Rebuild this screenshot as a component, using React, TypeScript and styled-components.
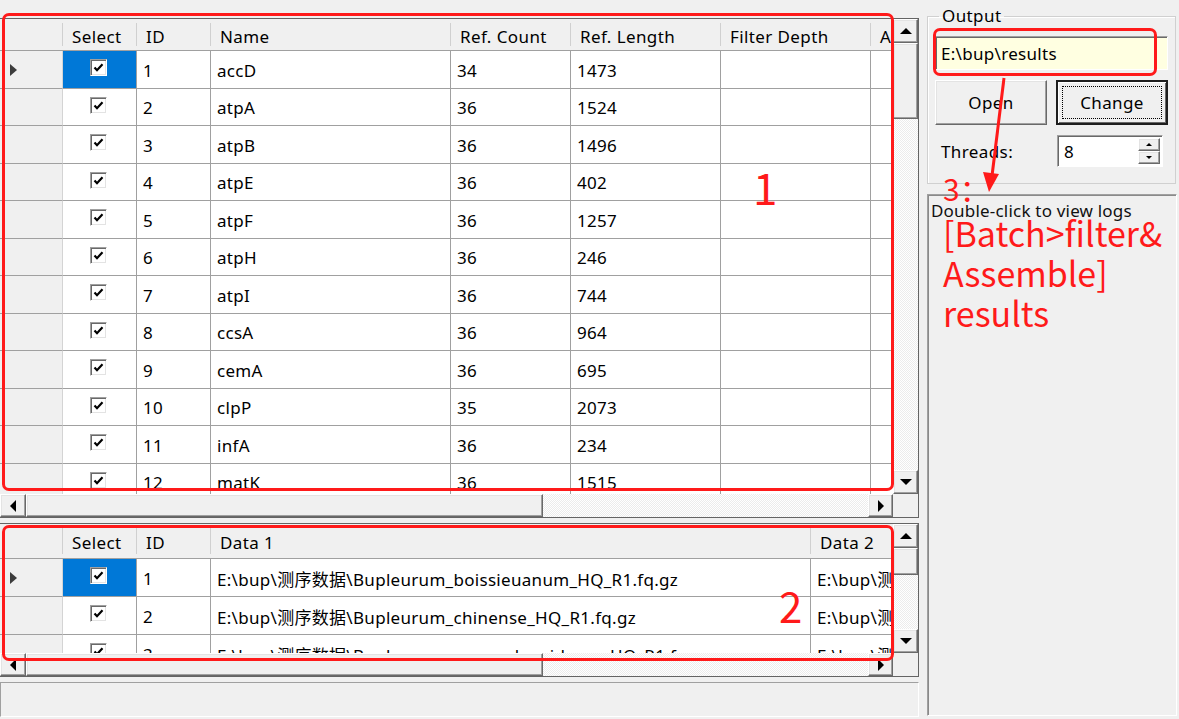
import React from 'react';
import styled, { createGlobalStyle, css } from 'styled-components';

const Global = createGlobalStyle`
  html, body { margin: 0; padding: 0; background: #f0f0f0; }
  body { font-family: "Noto Sans", "Noto Sans CJK SC", sans-serif; }
`;

const UI_FONT = `"Noto Sans", "Noto Sans CJK SC", sans-serif`;
const RED = '#ff1a1a';

const Window = styled.div`
  position: relative;
  width: 1179px;
  height: 719px;
  overflow: hidden;
  background: #f0f0f0;
  display: flex;
  font-family: ${UI_FONT};
  font-size: 17px;
  color: #000;
`;

const LeftPane = styled.div`
  width: 919px;
  flex: none;
  box-sizing: border-box;
  padding-top: 18px;
  display: flex;
  flex-direction: column;
  gap: 5px;
`;

const GridFrame = styled.div<{ $h: number }>`
  height: ${p => p.$h}px;
  box-sizing: border-box;
  border: 1px solid #646464;
  border-left: none;
  display: grid;
  grid-template-columns: 1fr 25px;
  grid-template-rows: 1fr 23px;
  background: #f0f0f0;
  overflow: hidden;
`;

const TableArea = styled.div`
  overflow: hidden;
  background: #fff;
  min-width: 0;
  min-height: 0;
`;

const Row = styled.div<{ $h: number }>`
  display: flex;
  height: ${p => p.$h}px;
  width: max-content;
`;

const HeadCell = styled.div<{ $w: number; $sep?: boolean }>`
  position: relative;
  width: ${p => p.$w}px;
  flex: none;
  box-sizing: border-box;
  background: #f0f0f0;
  border-bottom: 1px solid #a0a0a0;
  padding-left: 9px;
  padding-top: 3px;
  display: flex;
  align-items: center;
  white-space: nowrap;
  overflow: hidden;
  letter-spacing: 0.4px;
  ${p => p.$sep && css`
    &::after {
      content: '';
      position: absolute;
      right: 0;
      top: 4px;
      bottom: 4px;
      width: 1px;
      background: #d0d0d0;
    }
  `}
`;

const RowHead = styled.div`
  width: 63px;
  flex: none;
  box-sizing: border-box;
  background: #f0f0f0;
  border-bottom: 1px solid #a0a0a0;
  border-right: 1px solid #d4d4d4;
  display: flex;
  align-items: center;
  padding-left: 10px;
`;

const Cell = styled.div<{ $w: number; $sel?: boolean; $center?: boolean }>`
  width: ${p => p.$w}px;
  flex: none;
  box-sizing: border-box;
  border-right: 1px solid #a0a0a0;
  border-bottom: 1px solid #a0a0a0;
  background: ${p => (p.$sel ? '#0078d7' : '#fff')};
  display: flex;
  align-items: center;
  justify-content: ${p => (p.$center ? 'center' : 'flex-start')};
  padding-left: ${p => (p.$center ? '0' : '6px')};
  padding-top: 1px;
  white-space: nowrap;
  overflow: hidden;
  letter-spacing: 0.3px;
`;

const CheckBox = styled.span`
  display: inline-flex;
  align-items: center;
  justify-content: center;
  width: 17px;
  height: 17px;
  box-sizing: border-box;
  margin-left: -3px;
  margin-top: -5px;
  border: 1px solid;
  border-color: #a0a0a0 #ffffff #ffffff #a0a0a0;
  box-shadow: inset 1px 1px 0 #696969, inset -1px -1px 0 #e3e3e3;
  background: #fff;
`;

const RowArrow = styled.span`
  width: 0;
  height: 0;
  border-top: 6px solid transparent;
  border-bottom: 6px solid transparent;
  border-left: 7px solid #3c3c3c;
`;

const raised = css`
  box-sizing: border-box;
  background: #f0f0f0;
  border: 1px solid;
  border-color: #ffffff #696969 #696969 #ffffff;
  box-shadow: inset -1px -1px 0 #a0a0a0, inset 1px 1px 0 #e3e3e3;
`;

const VScroll = styled.div`
  display: flex;
  flex-direction: column;
  min-height: 0;
  overflow: hidden;
`;

const HScroll = styled.div`
  display: flex;
  min-width: 0;
  overflow: hidden;
`;

const Track = styled.div`
  flex: 1;
  background: repeating-conic-gradient(#ffffff 0 25%, #ececec 0 50%) 0 0 / 2px 2px;
`;

const ArrowBtn = styled.div<{ $len: number; $vertical?: boolean }>`
  ${raised};
  flex: none;
  ${p => (p.$vertical ? `height: ${p.$len}px;` : `width: ${p.$len}px;`)}
  display: flex;
  align-items: center;
  justify-content: center;
`;

const Thumb = styled.div<{ $len: number; $vertical?: boolean }>`
  ${raised};
  flex: none;
  ${p => (p.$vertical ? `height: ${p.$len}px;` : `width: ${p.$len}px;`)}
`;

const Tri = styled.span<{ $dir: 'up' | 'down' | 'left' | 'right' }>`
  width: 0;
  height: 0;
  ${p =>
    p.$dir === 'up'
      ? 'border-left: 6px solid transparent; border-right: 6px solid transparent; border-bottom: 6px solid #000;'
      : p.$dir === 'down'
      ? 'border-left: 6px solid transparent; border-right: 6px solid transparent; border-top: 6px solid #000;'
      : p.$dir === 'left'
      ? 'border-top: 6px solid transparent; border-bottom: 6px solid transparent; border-right: 6px solid #000;'
      : 'border-top: 6px solid transparent; border-bottom: 6px solid transparent; border-left: 6px solid #000;'}
`;

const Corner = styled.div`
  background: #f0f0f0;
`;

const StatusBar = styled.div`
  height: 35px;
  box-sizing: border-box;
  border: 1px solid;
  border-color: #a0a0a0 #ffffff #ffffff #a0a0a0;
  background: #f0f0f0;
`;

const RightPane = styled.div`
  flex: 1;
  box-sizing: border-box;
  padding: 6px 2px 3px 8px;
  display: flex;
  flex-direction: column;
  gap: 10px;
`;

const GroupBox = styled.fieldset`
  margin: 0;
  box-sizing: border-box;
  width: 249px;
  height: 178px;
  border: 1px solid #d0d0d0;
  box-shadow: inset 1px 1px 0 #fff;
  padding: 10px 7px 0 7px;
  display: flex;
  flex-direction: column;
`;

const Legend = styled.legend`
  padding: 0 3px;
  margin-left: 4px;
  font-size: 17px;
  line-height: 20px;
  letter-spacing: 0.4px;
`;

const PathBox = styled.div`
  height: 34px;
  box-sizing: border-box;
  border: 1px solid;
  border-color: #a0a0a0 #ffffff #ffffff #a0a0a0;
  box-shadow: inset 1px 1px 0 #696969;
  background: #ffffe1;
  display: flex;
  align-items: center;
  padding-left: 5px;
  letter-spacing: 0.3px;
`;

const ButtonRow = styled.div`
  display: flex;
  gap: 9px;
  margin-top: 10px;
`;

const Button = styled.div<{ $default?: boolean }>`
  width: 112px;
  height: 45px;
  box-sizing: border-box;
  background: #f0f0f0;
  display: flex;
  align-items: center;
  justify-content: center;
  letter-spacing: 0.4px;
  position: relative;
  ${p =>
    p.$default
      ? css`
          border: 2px solid #1e1e1e;
          box-shadow: inset 1px 1px 0 #fff, inset -1px -1px 0 #696969;
          &::after {
            content: '';
            position: absolute;
            inset: 4px;
            border: 1px dotted #000;
          }
        `
      : css`
          border: 1px solid;
          border-color: #ffffff #696969 #696969 #ffffff;
          box-shadow: inset -1px -1px 0 #a0a0a0, inset 1px 1px 0 #e3e3e3;
        `}
`;

const ThreadRow = styled.div`
  display: flex;
  align-items: center;
  margin-top: 10px;
`;

const ThreadLabel = styled.div`
  width: 122px;
  padding-left: 6px;
  box-sizing: border-box;
  letter-spacing: 0.4px;
`;

const Spin = styled.div`
  width: 106px;
  height: 32px;
  box-sizing: border-box;
  border: 1px solid;
  border-color: #a0a0a0 #ffffff #ffffff #a0a0a0;
  box-shadow: inset 1px 1px 0 #696969;
  background: #fff;
  display: flex;
  align-items: center;
  padding: 2px 2px 2px 6px;
`;

const SpinValue = styled.div`
  flex: 1;
`;

const SpinButtons = styled.div`
  width: 22px;
  height: 100%;
  display: flex;
  flex-direction: column;
`;

const SpinBtn = styled.div`
  ${raised};
  flex: 1;
  display: flex;
  align-items: center;
  justify-content: center;
`;

const SmallTri = styled.span<{ $up?: boolean }>`
  width: 0;
  height: 0;
  border-left: 3px solid transparent;
  border-right: 3px solid transparent;
  ${p => (p.$up ? 'border-bottom: 3px solid #000;' : 'border-top: 3px solid #000;')}
`;

const LogPanel = styled.div`
  flex: 1;
  box-sizing: border-box;
  border: 1px solid;
  border-color: #a0a0a0 #ffffff #ffffff #a0a0a0;
  box-shadow: inset 1px 1px 0 #8a8a8a;
  padding: 6px 3px;
  font-size: 17px;
  line-height: 20px;
  letter-spacing: 0.2px;
  color: #111;
`;

/* annotation overlay */
const Overlay = styled.div`
  position: absolute;
  inset: 0;
  pointer-events: none;
`;

const RedBox = styled.div<{ $x: number; $y: number; $w: number; $h: number }>`
  position: absolute;
  left: ${p => p.$x}px;
  top: ${p => p.$y}px;
  width: ${p => p.$w}px;
  height: ${p => p.$h}px;
  box-sizing: border-box;
  border: 3px solid ${RED};
  border-radius: 7px;
`;

const RedText = styled.div<{ $x: number; $y: number; $size: number; $lh?: number }>`
  position: absolute;
  left: ${p => p.$x}px;
  top: ${p => p.$y}px;
  font-family: "Noto Sans CJK SC", "Noto Sans", sans-serif;
  font-size: ${p => p.$size}px;
  line-height: ${p => p.$lh ?? p.$size * 1.2}px;
  color: ${RED};
  white-space: pre;
`;

const ArrowSvg = styled.svg`
  position: absolute;
  left: 0;
  top: 0;
`;

type Col = { title: string; w: number };

const Check = () => (
  <CheckBox>
    <svg width="11" height="11" viewBox="0 0 11 11">
      <polyline points="1.5,5.5 4,8.2 9.5,2.2" fill="none" stroke="#000" strokeWidth="2.2" />
    </svg>
  </CheckBox>
);

type GridProps = {
  height: number;
  cols: Col[];
  rows: string[][];
  headerH: number;
  rowH: number;
  vThumb: number;
  hThumb: number;
};

const DataGrid = ({ height, cols, rows, headerH, rowH, vThumb, hThumb }: GridProps) => (
  <GridFrame $h={height}>
    <TableArea>
      <Row $h={headerH}>
        <HeadCell $w={63} $sep />
        {cols.map(c => (
          <HeadCell key={c.title} $w={c.w} $sep>
            {c.title}
          </HeadCell>
        ))}
      </Row>
      {rows.map((r, i) => {
        const h = Math.round((i + 1) * rowH) - Math.round(i * rowH);
        return (
          <Row key={i} $h={h}>
            <RowHead>{i === 0 && <RowArrow />}</RowHead>
            <Cell $w={cols[0].w} $sel={i === 0} $center>
              <Check />
            </Cell>
            {r.map((v, j) => (
              <Cell key={j} $w={cols[j + 1].w}>
                {v}
              </Cell>
            ))}
          </Row>
        );
      })}
    </TableArea>
    <VScroll>
      <ArrowBtn $len={24} $vertical>
        <Tri $dir="up" />
      </ArrowBtn>
      <Thumb $len={vThumb} $vertical />
      <Track />
      <ArrowBtn $len={24} $vertical>
        <Tri $dir="down" />
      </ArrowBtn>
    </VScroll>
    <HScroll>
      <ArrowBtn $len={26}>
        <Tri $dir="left" />
      </ArrowBtn>
      <Thumb $len={hThumb} />
      <Track />
      <ArrowBtn $len={25}>
        <Tri $dir="right" />
      </ArrowBtn>
    </HScroll>
    <Corner />
  </GridFrame>
);

const TOP_COLS: Col[] = [
  { title: 'Select', w: 74 },
  { title: 'ID', w: 74 },
  { title: 'Name', w: 240 },
  { title: 'Ref. Count', w: 120 },
  { title: 'Ref. Length', w: 150 },
  { title: 'Filter Depth', w: 150 },
  { title: 'Assemble Depth', w: 150 },
];

const TOP_ROWS: [string, string, string, string][] = [
  ['1', 'accD', '34', '1473'],
  ['2', 'atpA', '36', '1524'],
  ['3', 'atpB', '36', '1496'],
  ['4', 'atpE', '36', '402'],
  ['5', 'atpF', '36', '1257'],
  ['6', 'atpH', '36', '246'],
  ['7', 'atpI', '36', '744'],
  ['8', 'ccsA', '36', '964'],
  ['9', 'cemA', '36', '695'],
  ['10', 'clpP', '35', '2073'],
  ['11', 'infA', '36', '234'],
  ['12', 'matK', '36', '1515'],
  ['13', 'ndhA', '36', '1092'],
];

const BOTTOM_COLS: Col[] = [
  { title: 'Select', w: 74 },
  { title: 'ID', w: 74 },
  { title: 'Data 1', w: 600 },
  { title: 'Data 2', w: 600 },
];

const P = 'E:\\bup\\测序数据\\';
const BOTTOM_ROWS = [
  ['1', P + 'Bupleurum_boissieuanum_HQ_R1.fq.gz', P + 'Bupleurum_boissieuanum_HQ_R2.fq.gz'],
  ['2', P + 'Bupleurum_chinense_HQ_R1.fq.gz', P + 'Bupleurum_chinense_HQ_R2.fq.gz'],
  ['3', P + 'Bupleurum_commelynoideum_HQ_R1.fq.gz', P + 'Bupleurum_commelynoideum_HQ_R2.fq.gz'],
];

export default function App() {
  return (
    <>
      <Global />
      <Window>
        <LeftPane>
          <DataGrid
            height={500}
            cols={TOP_COLS}
            rows={TOP_ROWS.map(r => [r[0], r[1], r[2], r[3], '', ''])}
            headerH={32}
            rowH={37.5}
            vThumb={76}
            hThumb={517}
          />
          <DataGrid
            height={154}
            cols={BOTTOM_COLS}
            rows={BOTTOM_ROWS}
            headerH={35}
            rowH={38}
            vThumb={27}
            hThumb={517}
          />
          <StatusBar />
        </LeftPane>
        <RightPane>
          <GroupBox>
            <Legend>Output</Legend>
            <PathBox>E:\bup\results</PathBox>
            <ButtonRow>
              <Button>Open</Button>
              <Button $default>Change</Button>
            </ButtonRow>
            <ThreadRow>
              <ThreadLabel>Threads:</ThreadLabel>
              <Spin>
                <SpinValue>8</SpinValue>
                <SpinButtons>
                  <SpinBtn>
                    <SmallTri $up />
                  </SpinBtn>
                  <SpinBtn>
                    <SmallTri />
                  </SpinBtn>
                </SpinButtons>
              </Spin>
            </ThreadRow>
          </GroupBox>
          <LogPanel>Double-click to view logs</LogPanel>
        </RightPane>
        <Overlay>
          <RedBox $x={2} $y={13} $w={892} $h={478} />
          <RedBox $x={2} $y={525} $w={892} $h={136} />
          <RedBox $x={933} $y={28} $w={224} $h={48} />
          <RedText $x={753} $y={160} $size={44}>1</RedText>
          <RedText $x={779} $y={580} $size={42}>2</RedText>
          <RedText $x={943} $y={170} $size={30}>3：</RedText>
          <RedText $x={943} $y={213} $size={34} $lh={40}>
            {'[Batch>filter&\nAssemble]\nresults'}
          </RedText>
          <ArrowSvg width="1179" height="719" viewBox="0 0 1179 719">
            <line x1="1004" y1="78" x2="992" y2="176" stroke={RED} strokeWidth="3" />
            <polygon points="983,172 999,174 989,192" fill={RED} />
          </ArrowSvg>
        </Overlay>
      </Window>
    </>
  );
}
